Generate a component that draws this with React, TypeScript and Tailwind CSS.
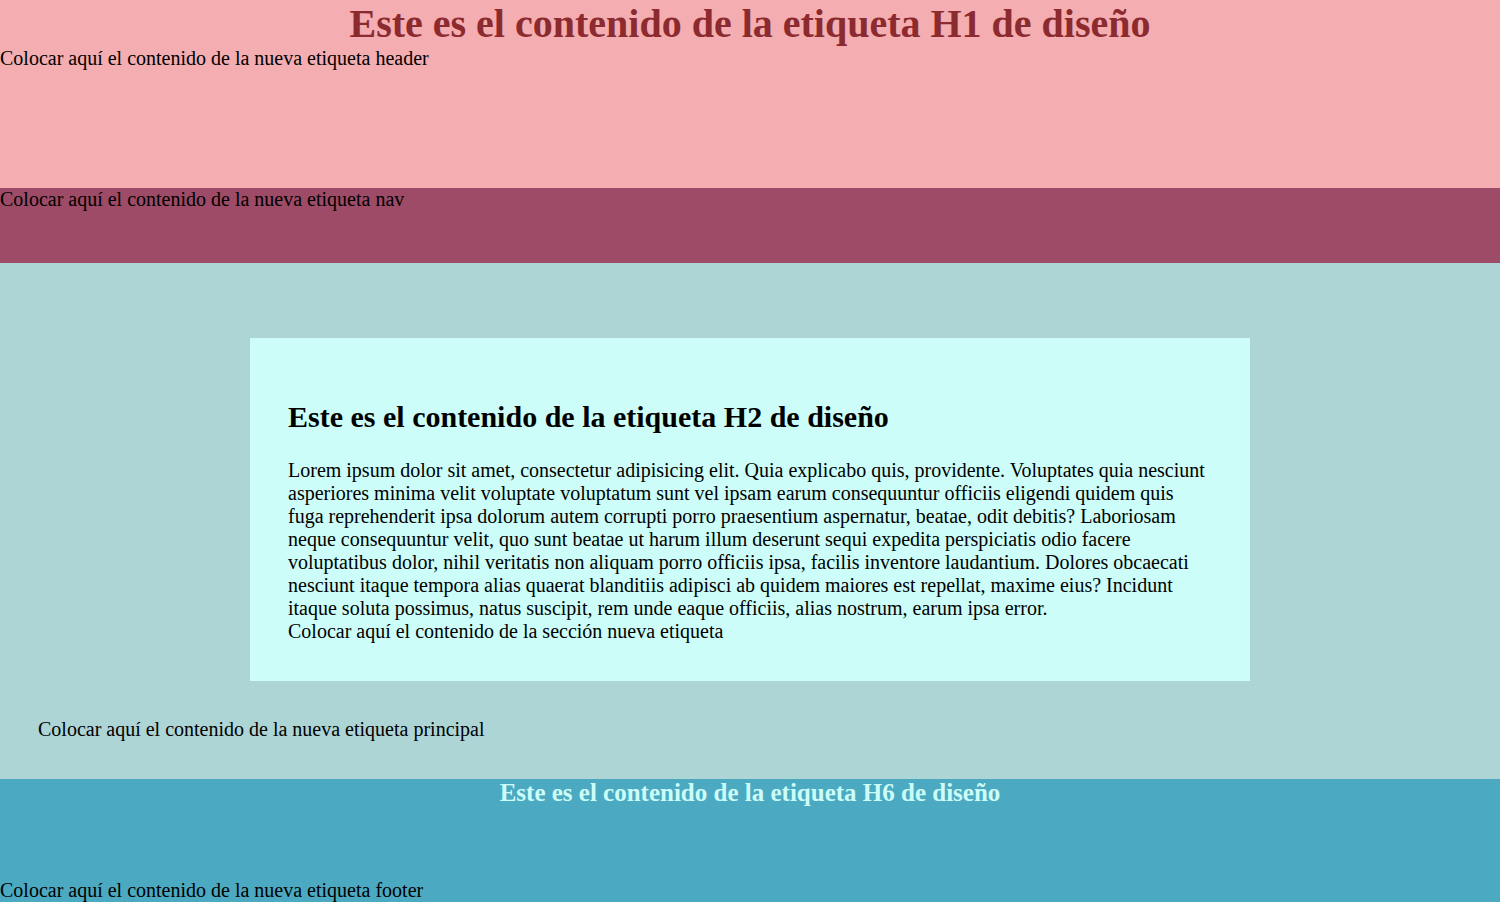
import React from 'react';

const lorem =
    'Lorem ipsum dolor sit amet, consectetur adipisicing elit. Quia explicabo quis, providente. Voluptates quia nesciunt asperiores minima velit voluptate voluptatum sunt vel ipsam earum consequuntur officiis eligendi quidem quis fuga reprehenderit ipsa dolorum autem corrupti porro praesentium aspernatur, beatae, odit debitis? Laboriosam neque consequuntur velit, quo sunt beatae ut harum illum deserunt sequi expedita perspiciatis odio facere voluptatibus dolor, nihil veritatis non aliquam porro officiis ipsa, facilis inventore laudantium. Dolores obcaecati nesciunt itaque tempora alias quaerat blanditiis adipisci ab quidem maiores est repellat, maxime eius? Incidunt itaque soluta possimus, natus suscipit, rem unde eaque officiis, alias nostrum, earum ipsa error.';

const App: React.FC = () => {
    return (
        <div className="font-['Liberation_Serif','Times_New_Roman',serif] text-[20px] leading-[23px] text-black">
            <header className="h-[188px] bg-[#f4adb0]">
                <h1 className="text-center text-[40px] leading-[47px] font-bold text-[#8b2a2f]">
                    Este es el contenido de la etiqueta H1 de diseño
                </h1>
                <p>Colocar aquí el contenido de la nueva etiqueta header</p>
            </header>

            <nav className="h-[75px] bg-[#9d4b67]">
                <p>Colocar aquí el contenido de la nueva etiqueta nav</p>
            </nav>

            <main className="bg-[#aed5d6] pt-[75px] pb-[38px]">
                <section className="mx-auto w-[1000px] bg-[#ccfdf8] px-[38px] pt-[62px] pb-[38px]">
                    <h2 className="text-[30px] leading-[34px] font-bold">Este es el contenido de la etiqueta H2 de diseño</h2>
                    <p className="mt-[25px]">{lorem}</p>
                    Colocar aquí el contenido de la sección nueva etiqueta
                </section>
                <p className="mt-[37px] pl-[38px]">Colocar aquí el contenido de la nueva etiqueta principal</p>
            </main>

            <footer className="flex h-[123px] flex-col justify-between bg-[#4baac2]">
                <h6 className="text-center text-[25px] leading-[27px] font-bold text-[#ccfdf8]">
                    Este es el contenido de la etiqueta H6 de diseño
                </h6>
                <p>Colocar aquí el contenido de la nueva etiqueta footer</p>
            </footer>
        </div>
    );
};

export default App;
